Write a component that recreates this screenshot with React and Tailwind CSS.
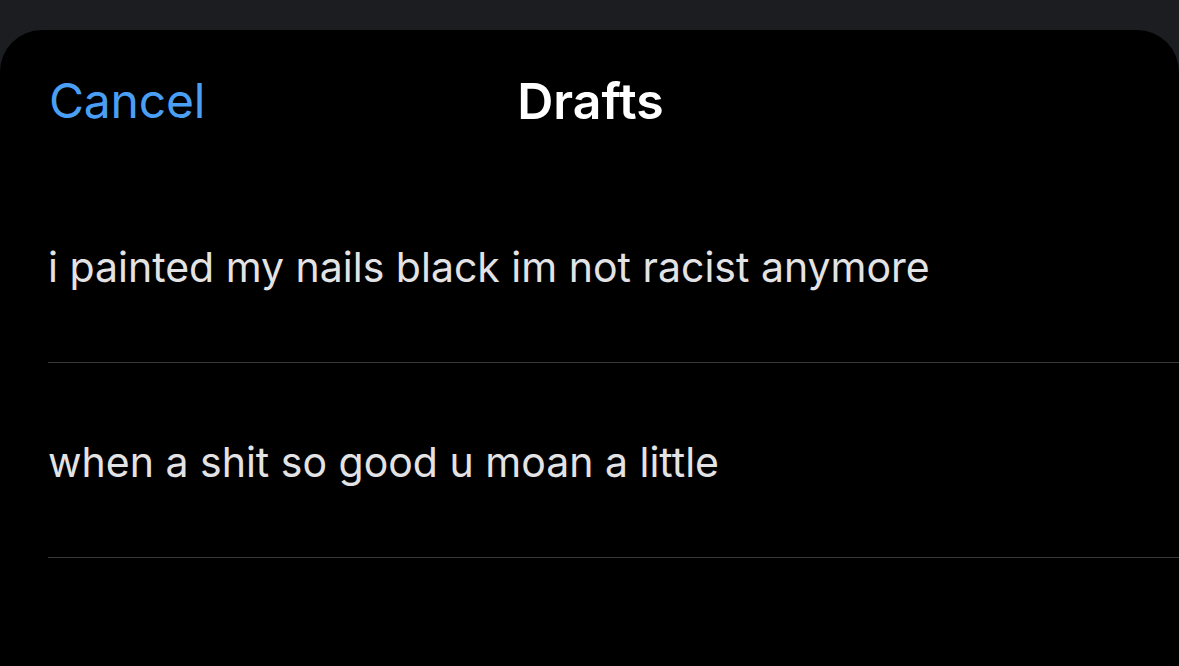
export default function App() {
  const drafts = [
    "i painted my nails black im not racist anymore",
    "when a shit so good u moan a little",
  ];
  return (
    <div
      className="w-[1179px] h-[666px] overflow-hidden bg-[#1c1d21] pt-[30px]"
      style={{ fontFamily: "Inter, 'Noto Sans', sans-serif" }}
    >
      <div className="h-full bg-black rounded-t-[42px]">
        <div className="relative flex items-center h-[138px] px-[49px] pt-[4px]">
          <span className="text-[48px] text-[#4a9ff5] tracking-[-0.2px] leading-none">Cancel</span>
          <span className="absolute left-0 right-0 text-center text-[50px] font-semibold text-white leading-none tracking-[0px] pl-[2px]">
            Drafts
          </span>
        </div>
        <div className="pl-[48px]">
          {drafts.map((d) => (
            <div key={d} className="h-[195px] flex items-center border-b border-[#38383a] text-[41px] text-[#e3e3e5] tracking-[0px] leading-none pt-[4px]">
              {d}
            </div>
          ))}
        </div>
      </div>
    </div>
  );
}
